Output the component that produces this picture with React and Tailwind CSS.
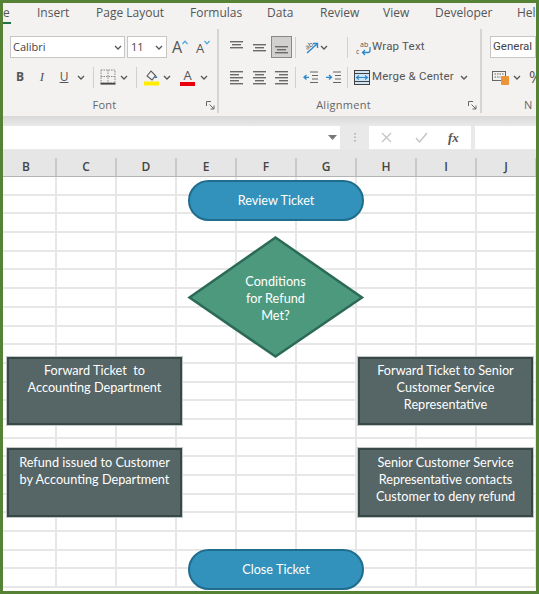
const cols = ["B","C","D","E","F","G","H","I","J"];
const tabs = [["e","w-[8px]"],["Insert","ml-[26px] w-[30px]"],["Page Layout","ml-[29px] w-[66px]"],["Formulas","ml-[28px] w-[50px]"],["Data","ml-[27px] w-[26px]"],["Review","ml-[27px] w-[37px]"],["View","ml-[26px] w-[26px]"],["Developer","ml-[26px] w-[56px]"],["Help","ml-[26px] w-[26px]"]];

const Chev = ({ className = "" }) => (
  <svg width="8" height="5" viewBox="0 0 8 5" className={`shrink-0 ${className}`}><path d="M1 1l3 3 3-3" fill="none" stroke="#555" strokeWidth="1.3"/></svg>
);
const Sep = ({ className = "" }) => <div className={`w-px h-[21px] shrink-0 bg-[#d2d0ce] ${className}`} />;
const Launcher = () => (
  <svg width="9" height="9" viewBox="0 0 9 9"><path d="M.5 5V.5H5M3.5 3.5L8 8M8 4.5V8H4.5" fill="none" stroke="#666" strokeWidth="1"/></svg>
);
const Lines = ({ rows }) => (
  <svg width="15" height="15" viewBox="0 0 15 15" className="shrink-0">
    {rows.map(([x, y, w], i) => <rect key={i} x={x} y={y} width={w} height="1.4" fill="#6a6a6a" />)}
  </svg>
);
const AlignIcon = ({ kind }) => {
  const m = {
    top: [[1,1,13],[3,4,9],[1,7,13]],
    mid: [[1,4,13],[3,7,9],[1,10,13]],
    bot: [[1,6,13],[3,9,9],[1,12,13]],
    left: [[1,1,13],[1,4,9],[1,7,13],[1,10,9],[1,13,13]],
    center: [[1,1,13],[3,4,9],[1,7,13],[3,10,9],[1,13,13]],
    right: [[1,1,13],[5,4,9],[1,7,13],[5,10,9],[1,13,13]],
  };
  return <Lines rows={m[kind]} />;
};
const Indent = ({ flip }) => (
  <svg width="15" height="13" viewBox="0 0 15 13" className="shrink-0">
    <path d="M7 1h8M9 4.5h6M9 8h6M7 11.5h8" stroke="#666" strokeWidth="1.2" fill="none"/>
    <path d={flip ? "M0 6.3h5M3 4l2.5 2.3L3 8.6" : "M6 6.3H1M3.5 4L1 6.3l2.5 2.3"} stroke="#2b88c9" strokeWidth="1.3" fill="none"/>
  </svg>
);

function Grid() {
  return (
    <div className="-ml-[6px] grid grid-cols-[repeat(9,60px)] auto-rows-[18.7px] w-[540px]">
      {Array.from({ length: 9 * 22 }).map((_, i) => (
        <div key={i} className="border-r-[2px] border-b-[2px] border-[#e7e7e7] bg-white" />
      ))}
    </div>
  );
}

const Box = ({ className, children }) => (
  <div className={`absolute w-[175px] flex justify-center bg-[#566565] border-[2.5px] border-[#384847] outline outline-1 outline-[#c3c9c9] text-white text-[12.7px] leading-[17px] text-center ${className}`}>
    <div>{children}</div>
  </div>
);
const Pill = ({ className, children }) => (
  <div className={`absolute left-[185px] w-[176px] h-[41px] rounded-full bg-[#3292bb] border-[2.5px] border-[#1f6c8d] flex items-center justify-center text-white text-[12.7px] ${className}`}>
    {children}
  </div>
);

export default function App() {
  return (
    <div className="w-[539px] h-[594px] border-[3px] border-[#568236] overflow-hidden relative bg-white flex flex-col font-['Open_Sans',sans-serif] text-[#555]">
      {/* tabs */}
      <div className="h-[21px] shrink-0 bg-[#f3f2f1] flex items-start whitespace-nowrap text-[12px] leading-[17px] pt-[1px] overflow-hidden">
        {tabs.map(([t, c], i) => (
          <div key={t} className={`${c} shrink-0 ${i === 0 ? "h-[20px] border-b-[2px] border-[#217346]" : ""}`}>{t}</div>
        ))}
      </div>
      {/* ribbon */}
      <div className="h-[92px] shrink-0 bg-[#f3f2f1] flex text-[11px]">
        {/* Font */}
        <div className="w-[216px] shrink-0 border-r-[2px] border-[#d6d5d4] mb-[3px] mt-[5px] flex flex-col">
          <div className="flex items-center pl-[7px] mt-[7px] h-[22px]">
            <div className="w-[115px] h-[22px] bg-white border border-[#c8c6c4] flex items-center justify-between px-[2px] text-[#444]">Calibri<Chev /></div>
            <div className="ml-[2px] w-[40px] h-[22px] bg-white border border-[#c8c6c4] flex items-center justify-between px-[3px] text-[#444]">11<Chev /></div>
            <div className="ml-[5px] flex items-start w-[20px] text-[16px] leading-[20px] text-[#555]">A<svg width="6" height="5" viewBox="0 0 6 5" className="mt-[3px]"><path d="M.5 4L3 1.2 5.5 4" stroke="#4aa3df" strokeWidth="1.2" fill="none"/></svg></div>
            <div className="ml-[4px] flex items-start w-[20px] text-[13px] leading-[20px] text-[#555] pt-[1px]">A<svg width="6" height="5" viewBox="0 0 6 5" className="mt-[2px]"><path d="M.5 1L3 3.8 5.5 1" stroke="#4aa3df" strokeWidth="1.2" fill="none"/></svg></div>
          </div>
          <div className="flex items-center h-[22px] mt-[8px] pl-[8px]">
            <span className="w-[18px] text-center font-bold text-[12px]">B</span>
            <span className="ml-[6px] w-[14px] text-center italic text-[13px] font-['Liberation_Serif',serif]">I</span>
            <span className="ml-[7px] w-[16px] text-center underline text-[12px]">U</span>
            <Chev className="ml-[5px]" />
            <Sep className="ml-[8px]" />
            <svg width="16" height="16" viewBox="0 0 16 16" className="ml-[6px] shrink-0">
              <path d="M1 1h14v13H1zM8 1v13M1 7.5h14" fill="none" stroke="#888" strokeWidth="1" strokeDasharray="1.5 1"/>
              <path d="M0.5 14.7h15" stroke="#444" strokeWidth="1.8"/>
            </svg>
            <Chev className="ml-[4px]" />
            <Sep className="ml-[8px]" />
            <svg width="16" height="17" viewBox="0 0 16 17" className="ml-[7px] shrink-0">
              <path d="M3 7l4-5 4.5 4.5L8 11z" fill="none" stroke="#555" strokeWidth="1.1"/>
              <path d="M12 6.5l1.5 2.5h-3z" fill="#2b78b8"/>
              <rect x="0" y="12.5" width="15" height="4" fill="#ffec00"/>
            </svg>
            <Chev className="ml-[3px]" />
            <div className="ml-[9px] w-[15px] flex flex-col items-center">
              <span className="text-[13px] leading-[13px] text-[#555]">A</span>
              <div className="w-[15px] h-[4px] bg-[#e8000d]" />
            </div>
            <Chev className="ml-[5px]" />
          </div>
          <div className="flex items-center mt-auto pr-[2px] h-[16px]">
            <div className="flex-1 text-center text-[11px] tracking-wide text-[#666]">Font</div>
            <Launcher />
          </div>
        </div>
        {/* Alignment */}
        <div className="w-[263px] shrink-0 border-r-[2px] border-[#d6d5d4] mb-[3px] mt-[5px] flex flex-col">
          <div className="flex items-center h-[22px] mt-[7px] pl-[10px]">
            <AlignIcon kind="top" />
            <div className="ml-[8px]"><AlignIcon kind="mid" /></div>
            <div className="ml-[4px] w-[21px] h-[22px] bg-[#d2d0ce] border border-[#8a8886] flex items-center justify-center"><AlignIcon kind="bot" /></div>
            <Sep className="ml-[3px]" />
            <svg width="17" height="16" viewBox="0 0 17 16" className="ml-[7px] shrink-0">
              <text x="6" y="9" fontSize="7" textAnchor="middle" fill="#555" transform="rotate(-35 6 6.5)" fontFamily="Open Sans">ab</text>
              <path d="M4 14L14 5M10 4.5h4.5V9" stroke="#2b88c9" strokeWidth="1.4" fill="none"/>
            </svg>
            <Chev />
            <Sep className="ml-[19px]" />
            <svg width="16" height="17" viewBox="0 0 16 17" className="ml-[8px] shrink-0">
              <text x="4" y="8" fontSize="7" fill="#555" fontFamily="Open Sans">ab</text>
              <text x="0" y="15" fontSize="7" fill="#555" fontFamily="Open Sans">c</text>
              <path d="M14 8v3.5a2 2 0 01-2 2H7M9 11l-2.5 2.5L9 16" stroke="#2b88c9" strokeWidth="1.3" fill="none"/>
            </svg>
            <span className="text-[11.5px] font-['Roboto',sans-serif] tracking-[.2px] text-[#555] whitespace-nowrap">Wrap Text</span>
          </div>
          <div className="flex items-center h-[22px] mt-[8px] pl-[10px]">
            <AlignIcon kind="left" />
            <div className="ml-[8px]"><AlignIcon kind="center" /></div>
            <div className="ml-[7px]"><AlignIcon kind="right" /></div>
            <Sep className="ml-[6px]" />
            <div className="ml-[7px]"><Indent /></div>
            <div className="ml-[8px]"><Indent flip /></div>
            <Sep className="ml-[6px]" />
            <svg width="16" height="15" viewBox="0 0 16 15" className="ml-[6px] shrink-0">
              <rect x=".5" y=".5" width="15" height="14" fill="#cfe5f5" stroke="#444"/>
              <path d="M.5 3.5h15M.5 11.5h15" stroke="#444"/>
              <path d="M2.5 7.5h11M5 5.5l-2.5 2 2.5 2M11 5.5l2.5 2-2.5 2" stroke="#2b88c9" strokeWidth="1.1" fill="none"/>
            </svg>
            <span className="ml-[2px] w-[88px] shrink-0 text-[11.5px] font-['Roboto',sans-serif] tracking-[.2px] text-[#555] whitespace-nowrap">Merge & Center</span>
            <Chev />
          </div>
          <div className="flex items-center mt-auto pr-[3px] h-[16px]">
            <div className="flex-1 text-center text-[11px] tracking-wide text-[#666]">Alignment</div>
            <Launcher />
          </div>
        </div>
        {/* Number */}
        <div className="flex-1 min-w-0 mt-[5px] mb-[3px] flex flex-col overflow-hidden whitespace-nowrap">
          <div className="ml-[8px] mt-[7px] h-[22px] bg-white border border-[#c8c6c4] flex items-center pl-[2px] text-[11.5px] font-['Roboto',sans-serif] text-[#444]">General</div>
          <div className="flex items-center h-[22px] mt-[8px] ml-[10px]">
            <svg width="18" height="15" viewBox="0 0 18 15" className="shrink-0">
              <rect x=".5" y="1.5" width="13" height="9" fill="none" stroke="#666"/>
              <path d="M2.5 4h9M2.5 7h6" stroke="#666" strokeDasharray="1.5 1"/>
              <rect x="9" y="6" width="8" height="9" rx="1" fill="#ed9439"/>
            </svg>
            <Chev className="ml-[3px]" />
            <span className="ml-[8px] text-[16px]">%</span>
          </div>
          <div className="mt-auto h-[16px] ml-[42px] text-[11px] text-[#666]">N</div>
        </div>
      </div>
      {/* formula bar */}
      <div className="h-[34px] shrink-0 bg-[#e6e6e6] bg-gradient-to-b from-[#d9d9d9] to-[#e9e9e9] to-[30%] flex items-start pt-[10px]">
        <div className="w-[337px] h-[23px] bg-white shrink-0 flex items-center justify-end pr-[3px]">
          <svg width="9" height="5" viewBox="0 0 9 5"><path d="M0 0h9L4.5 5z" fill="#777"/></svg>
        </div>
        <div className="w-[29px] h-[23px] flex items-center justify-center shrink-0">
          <svg width="2" height="10" viewBox="0 0 2 10"><path d="M1 0v10" stroke="#aaa" strokeWidth="1.5" strokeDasharray="1.5 2"/></svg>
        </div>
        <div className="w-[102px] h-[23px] bg-white shrink-0 flex items-center pl-[12px]">
          <svg width="11" height="11" viewBox="0 0 11 11"><path d="M1 1l9 9M10 1l-9 9" stroke="#c4c4c4" strokeWidth="1.3"/></svg>
          <svg width="13" height="11" viewBox="0 0 13 11" className="ml-[23px]"><path d="M1 6l3.5 4L12 1" stroke="#c4c4c4" strokeWidth="1.4" fill="none"/></svg>
          <span className="ml-[20px] italic font-bold text-[13px] font-['Liberation_Serif',serif] text-[#555]">fx</span>
        </div>
        <div className="ml-[4px] flex-1 h-[23px] bg-white" />
      </div>
      {/* headers */}
      <div className="h-[27px] shrink-0 bg-[#e6e6e6] border-b-[1.5px] border-[#b5b5b5] flex items-end -ml-[6px] w-[550px]">
        {cols.map((c) => (
          <div key={c} className="w-[60px] h-[18px] shrink-0 border-r-[2px] border-[#c9c9c9] flex items-center justify-center text-[12px] font-semibold leading-none text-[#444]">{c}</div>
        ))}
      </div>
      {/* sheet */}
      <div className="relative flex-1 overflow-hidden font-['Lato',sans-serif]">
        <Grid />
        <Pill className="top-[3px]">Review Ticket</Pill>
        <svg width="178" height="124" viewBox="0 0 178 124" className="absolute left-[184px] top-[58px]">
          <path d="M88.5 2.5L175 62.5 88.5 121.5 2.5 62.5z" fill="#4d997d" stroke="#2c6a58" strokeWidth="2.5"/>
        </svg>
        <div className="absolute left-[184px] top-[96px] w-[177px] text-center text-white text-[12.7px] leading-[17px]">Conditions<br/>for Refund<br/>Met?</div>
        <Box className="left-[4px] top-[180px] h-[68px] pt-[3px]">Forward Ticket&nbsp; to<br/>Accounting Department</Box>
        <Box className="left-[4px] top-[271px] h-[69px] pt-[4px]">Refund issued to Customer<br/>by Accounting Department</Box>
        <Box className="left-[355px] top-[180px] h-[68px] pt-[3px]">Forward Ticket to Senior<br/>Customer Service<br/>Representative</Box>
        <Box className="left-[355px] top-[271px] h-[69px] pt-[4px]">Senior Customer Service<br/>Representative contacts<br/>Customer to deny refund</Box>
        <Pill className="top-[372px]">Close Ticket</Pill>
      </div>
    </div>
  );
}
